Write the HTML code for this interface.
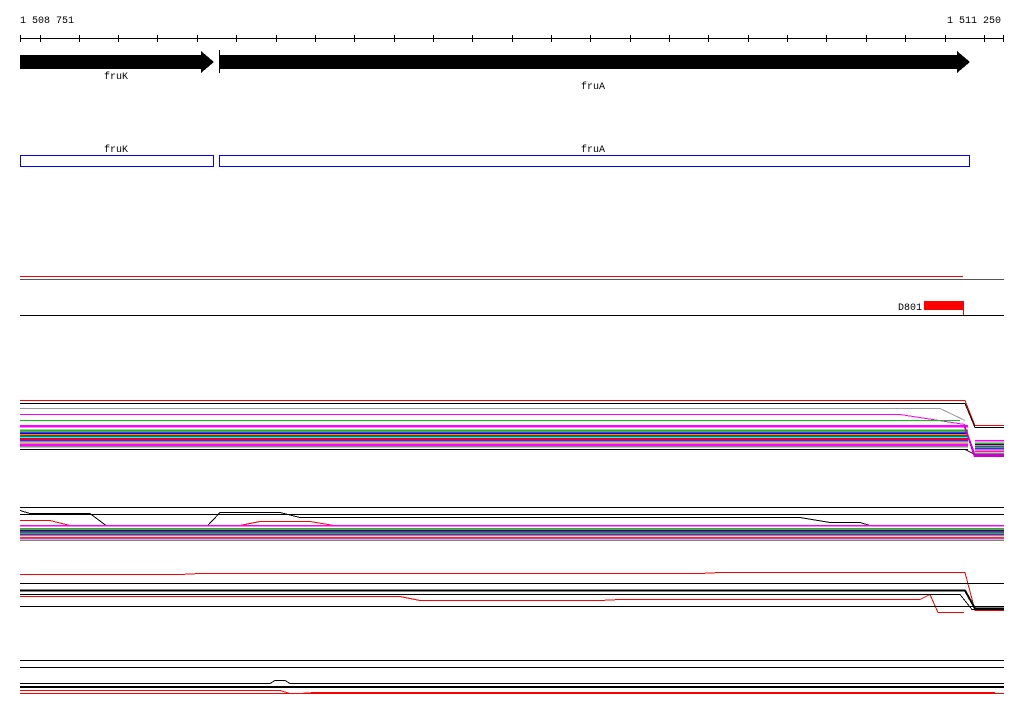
<!DOCTYPE html><html><head><style>html,body{margin:0;padding:0;background:#fff;width:1024px;height:714px;overflow:hidden}svg{display:block}text{font-family:"Liberation Mono",monospace;font-size:10px}</style></head><body>
<svg width="1024" height="714" viewBox="0 0 1024 714" shape-rendering="crispEdges">
<defs>
<linearGradient id="g1" x1="0" y1="0" x2="0" y2="1">
<stop offset="0" stop-color="#f0f"/><stop offset=".1" stop-color="#f0f"/><stop offset=".1" stop-color="#fff"/><stop offset=".18" stop-color="#fff"/><stop offset=".18" stop-color="#0c0"/><stop offset=".24" stop-color="#0c0"/><stop offset=".24" stop-color="#888"/><stop offset=".3" stop-color="#888"/><stop offset=".3" stop-color="#00f"/><stop offset=".36" stop-color="#00f"/><stop offset=".36" stop-color="#f80"/><stop offset=".42" stop-color="#f80"/><stop offset=".42" stop-color="#000"/><stop offset=".46" stop-color="#000"/><stop offset=".46" stop-color="#0ff"/><stop offset=".52" stop-color="#0ff"/><stop offset=".52" stop-color="#f00"/><stop offset=".58" stop-color="#f00"/><stop offset=".58" stop-color="#a0a"/><stop offset=".64" stop-color="#a0a"/><stop offset=".64" stop-color="#3af"/><stop offset=".7" stop-color="#3af"/><stop offset=".7" stop-color="#ff0"/><stop offset=".74" stop-color="#ff0"/><stop offset=".74" stop-color="#f0f"/><stop offset=".84" stop-color="#f0f"/><stop offset=".84" stop-color="#888"/><stop offset=".9" stop-color="#888"/><stop offset=".9" stop-color="#fff"/><stop offset=".96" stop-color="#fff"/><stop offset=".96" stop-color="#000"/><stop offset="1" stop-color="#000"/>
</linearGradient>
</defs>
<text x="20" y="23">1 508 751</text>
<text x="1001" y="23" text-anchor="end">1 511 250</text>
<line x1="20" y1="38.5" x2="1004" y2="38.5" stroke="#000"/>
<g stroke="#000">
<path d="M20.5 35v7M40.5 35v7M79.5 35v7M118.5 35v7M157.5 35v7M197.5 35v7M236.5 35v7M276.5 35v7M315.5 35v7M354.5 35v7M394.5 35v7M433.5 35v7M472.5 35v7M512.5 35v7M551.5 35v7M590.5 35v7M630.5 35v7M669.5 35v7M708.5 35v7M748.5 35v7M787.5 35v7M826.5 35v7M866.5 35v7M905.5 35v7M945.5 35v7M984.5 35v7M1003.5 35v7"/>
</g>
<path d="M20 55h181v-4l13 11-13 11v-4H20z" fill="#000"/>
<rect x="219" y="50" width="1" height="23" fill="#000"/>
<path d="M220 55h737v-4l13 11-13 11v-4H220z" fill="#000"/>
<text x="104" y="79">fruK</text>
<text x="581" y="89">fruA</text>
<text x="104" y="152">fruK</text>
<text x="581" y="152">fruA</text>
<rect x="20.5" y="155.5" width="193" height="11" fill="none" stroke="#00f"/>
<rect x="219.5" y="155.5" width="750" height="11" fill="none" stroke="#00f"/>
<rect x="20" y="276" width="943" height="1" fill="#f00"/>
<rect x="20" y="279" width="984" height="1" fill="#555"/>
<text x="898" y="310">D801</text>
<rect x="924" y="301" width="40" height="9" fill="#f00"/>
<rect x="963" y="301" width="1" height="14" fill="#f00"/>
<rect x="20" y="315" width="984" height="1" fill="#000"/>
<!-- band 1 -->
<g fill="none" stroke-width="1">
<path d="M20 400.5H965l10 25h29" stroke="#f00"/>
<path d="M20 403.5H965l10 24h29" stroke="#000"/>
<path d="M20 408.5H940l25 12" stroke="#999"/>
<path d="M20 414.5H900l65 10" stroke="#f0f"/>
<path d="M20 420.5H960" stroke="#0c0"/>
<path d="M20 449.5H965l10 5h29" stroke="#000"/>
</g>
<rect x="20" y="425" width="948" height="25" fill="url(#g1)"/>
<path d="M965 425l10 28h29v4h-30l-10-30z" fill="#c0c"/>
<rect x="975" y="440" width="29" height="14" fill="url(#g1)"/>
<!-- band 2 -->
<rect x="20" y="507" width="984" height="1" fill="#000"/>
<path d="M20 510.5l10 3H90l20 15H205l15-16H280l20 5H800l30 5h30l10 3" fill="none" stroke="#000"/>
<rect x="20" y="514" width="984" height="1" fill="#000"/>
<path d="M20 520.5H50l20 5H240l20-4h50l30 5h200" fill="none" stroke="#f00"/>
<rect x="20" y="525" width="984" height="16" fill="url(#g1)"/>
<!-- band 3 -->
<path d="M20 574.5H180l20-1H700l20-1H965l10 38h29" fill="none" stroke="#f00"/>
<rect x="20" y="583" width="984" height="1" fill="#000"/>
<path d="M20 590.5H965l10 18h29" fill="none" stroke="#000" stroke-width="2"/>
<path d="M20 596.5H400l20 4h180l20-1h300l10-5l8 18h26" fill="none" stroke="#f00"/>
<path d="M20 594.5H960l12 15h32" fill="none" stroke="#000"/>
<rect x="20" y="606" width="984" height="1" fill="#000"/>
<!-- band 4 -->
<rect x="20" y="660" width="984" height="1" fill="#000"/>
<rect x="20" y="667" width="984" height="1" fill="#000"/>
<path d="M20 683.5H270l5-3h10l5 3h714" fill="none" stroke="#000"/>
<rect x="20" y="686" width="984" height="2" fill="#000"/>
<path d="M20 690.5H280l10 3H1004" fill="none" stroke="#f00"/>
<path d="M20 693.5H300l15-1h680" fill="none" stroke="#f00"/>
</svg>
</body></html>
